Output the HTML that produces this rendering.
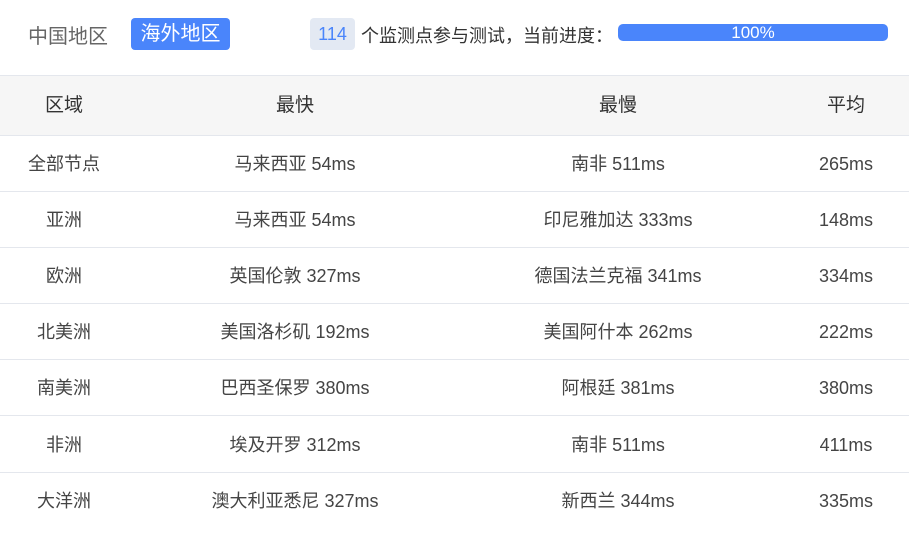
<!DOCTYPE html>
<html><head><meta charset="utf-8"><style>
body{margin:0;width:909px;height:553px;background:#fff;font-family:"Liberation Sans","Noto Sans CJK SC",sans-serif;color:#333;position:relative;overflow:hidden}
.a{position:absolute}
.hd{position:absolute;left:0;top:75px;width:909px;height:59px;background:#f6f6f6;border-top:1px solid #e4e7ed;border-bottom:1px solid #e4e7ed}
.r{position:absolute;left:0;width:909px;height:56px;border-bottom:1px solid #e4e7ed;box-sizing:border-box}
.c{position:absolute;top:0;height:56px;line-height:56px;text-align:center;font-size:18px;color:#444;white-space:nowrap}
.c1{left:0;width:128px}.c2{left:128px;width:334px}.c3{left:462px;width:312px}.c4{left:784px;width:124px}
.hd .c{height:59px;line-height:59px;font-size:19px;color:#333}
</style></head><body>
<div class="a" style="left:28px;top:20px;font-size:20px;color:#666">中国地区</div>
<div class="a" style="left:131px;top:18px;width:99px;height:32px;background:#4a85fb;border-radius:4px;color:#fff;font-size:20px;line-height:32px;text-align:center">海外地区</div>
<div class="a" style="left:310px;top:18px;width:45px;height:32px;background:#e3e9f3;border-radius:4px;color:#4a85fb;font-size:18px;line-height:32px;text-align:center">114</div>
<div class="a" style="left:361px;top:22px;font-size:18px;color:#333">个监测点参与测试，当前进度：</div>
<div class="a" style="left:618px;top:24px;width:270px;height:17px;background:#4a85fb;border-radius:5px;color:#fff;font-size:17px;line-height:17px;text-align:center">100%</div>
<div class="hd"><div class="c c1">区域</div><div class="c c2">最快</div><div class="c c3">最慢</div><div class="c c4">平均</div></div>
<div class="r" style="top:136px"><div class="c c1">全部节点</div><div class="c c2">马来西亚 54ms</div><div class="c c3">南非 511ms</div><div class="c c4">265ms</div></div>
<div class="r" style="top:192px"><div class="c c1">亚洲</div><div class="c c2">马来西亚 54ms</div><div class="c c3">印尼雅加达 333ms</div><div class="c c4">148ms</div></div>
<div class="r" style="top:248px"><div class="c c1">欧洲</div><div class="c c2">英国伦敦 327ms</div><div class="c c3">德国法兰克福 341ms</div><div class="c c4">334ms</div></div>
<div class="r" style="top:304px"><div class="c c1">北美洲</div><div class="c c2">美国洛杉矶 192ms</div><div class="c c3">美国阿什本 262ms</div><div class="c c4">222ms</div></div>
<div class="r" style="top:360px"><div class="c c1">南美洲</div><div class="c c2">巴西圣保罗 380ms</div><div class="c c3">阿根廷 381ms</div><div class="c c4">380ms</div></div>
<div class="r" style="top:417px"><div class="c c1">非洲</div><div class="c c2">埃及开罗 312ms</div><div class="c c3">南非 511ms</div><div class="c c4">411ms</div></div>
<div class="r" style="top:473px;border-bottom:none"><div class="c c1">大洋洲</div><div class="c c2">澳大利亚悉尼 327ms</div><div class="c c3">新西兰 344ms</div><div class="c c4">335ms</div></div>
</body></html>
